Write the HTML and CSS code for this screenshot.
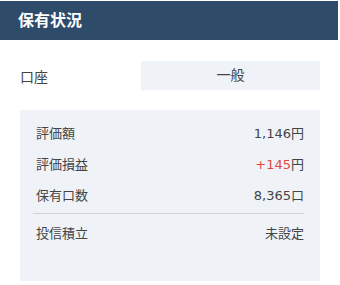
FILE: index.html
```html
<!DOCTYPE html>
<html lang="ja">
<head>
    <meta charset="UTF-8">
    <title>保有状況</title>
    <link rel="stylesheet" href="styles.css">
</head>
<body>
    <div class="holding">
        <h2 class="holding-title">保有状況</h2>

        <div class="account">
            <span class="account-label">口座</span>
            <span class="account-value">一般</span>
        </div>

        <div class="summary">
            <div class="summary-row">
                <span class="summary-label">評価額</span>
                <span class="summary-value">1,146円</span>
            </div>
            <div class="summary-row">
                <span class="summary-label">評価損益</span>
                <span class="summary-value"><span class="plus">+145</span>円</span>
            </div>
            <div class="summary-row">
                <span class="summary-label">保有口数</span>
                <span class="summary-value">8,365口</span>
            </div>
            <div class="divider"></div>
            <div class="summary-row">
                <span class="summary-label">投信積立</span>
                <span class="summary-value">未設定</span>
            </div>
        </div>
    </div>
</body>
</html>
```

FILE: styles.css
```css
* {
    margin: 0;
    padding: 0;
    box-sizing: border-box;
}

body {
    background-color: #ffffff;
    font-family: "DejaVu Sans", "Noto Sans CJK JP", sans-serif;
    color: #444444;
}

.holding {
    width: 338px;
    padding-top: 1px;
}

.holding-title {
    height: 39px;
    line-height: 39px;
    padding-left: 18px;
    background-color: #2e4b69;
    color: #ffffff;
    font-size: 16px;
    font-weight: bold;
}

.account {
    display: flex;
    align-items: center;
    margin-top: 21px;
    padding: 0 18px 0 20px;
}

.account-label {
    width: 121px;
    font-size: 14px;
}

.account-value {
    flex: 1;
    height: 29px;
    line-height: 29px;
    text-align: center;
    background-color: #eff2f6;
    font-size: 14px;
}

.summary {
    margin: 20px 18px 0 20px;
    height: 171px;
    padding: 8px 16px 0 13px;
    background-color: #eff3f7;
}

.summary-row {
    display: flex;
    justify-content: space-between;
    height: 31px;
    line-height: 31px;
    font-size: 13px;
}

.summary-label {
    padding-left: 3px;
}

.plus {
    color: #e0483f;
}

.divider {
    height: 1px;
    margin: 2px 0 4px;
    background-color: #cfd3d8;
}
```
